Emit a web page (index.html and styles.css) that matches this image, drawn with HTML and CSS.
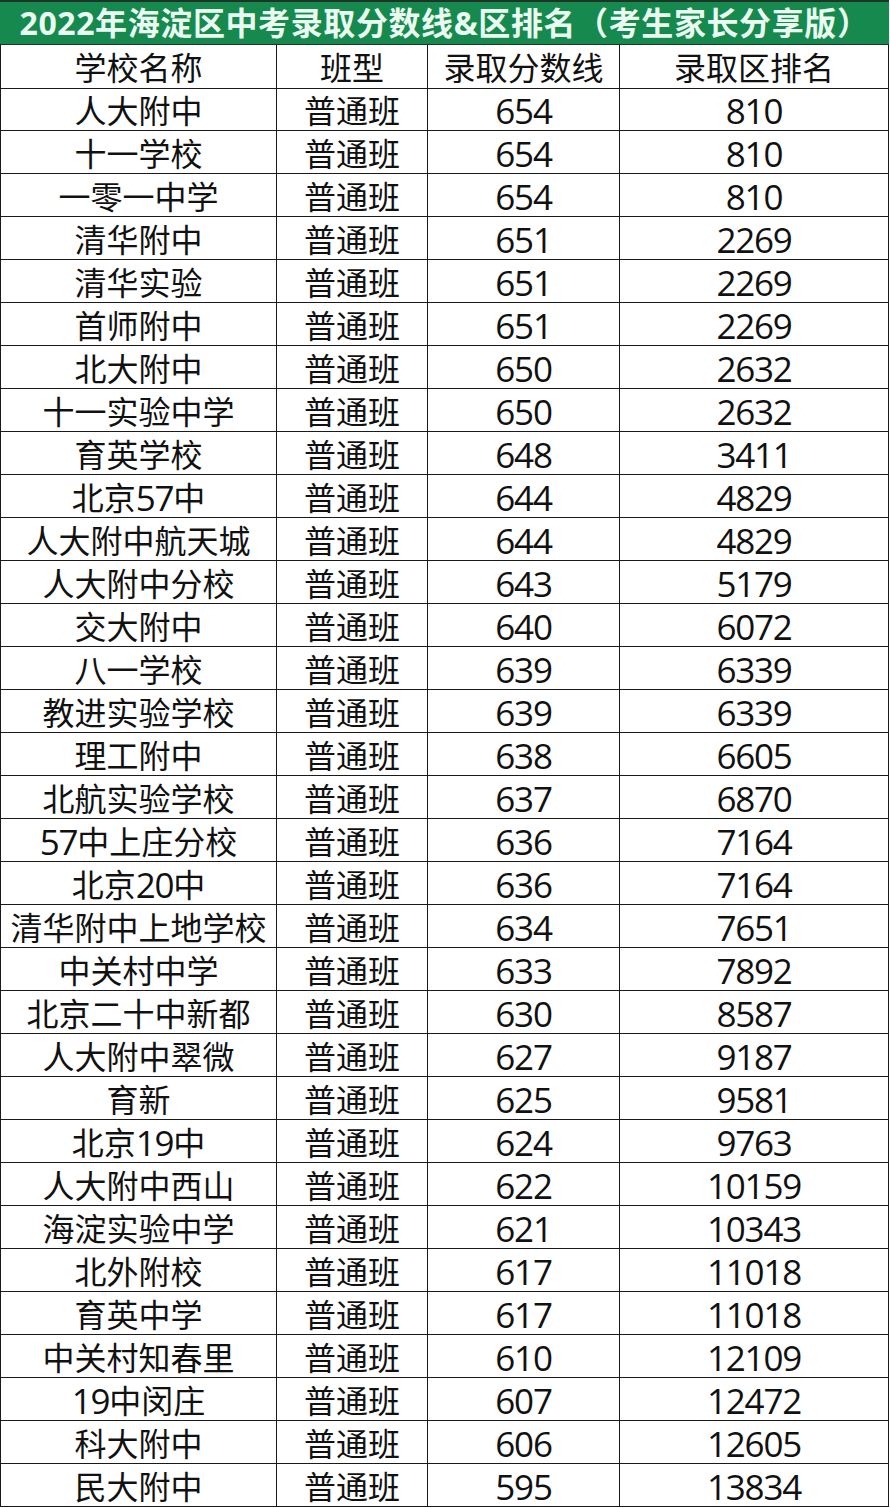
FILE: index.html
```html
<!DOCTYPE html>
<html lang="zh-CN">
<head>
<meta charset="utf-8">
<title>2022年海淀区中考录取分数线&amp;区排名</title>
<link rel="stylesheet" href="styles.css">
</head>
<body>
<div class="sheet">
  <div class="title">2022年海淀区中考录取分数线&amp;区排名（考生家长分享版）</div>
  <div class="grid">
    <div class="cell head">学校名称</div><div class="cell head">班型</div><div class="cell head">录取分数线</div><div class="cell head">录取区排名</div>
    <div class="cell">人大附中</div><div class="cell">普通班</div><div class="cell num">654</div><div class="cell num">810</div>
    <div class="cell">十一学校</div><div class="cell">普通班</div><div class="cell num">654</div><div class="cell num">810</div>
    <div class="cell">一零一中学</div><div class="cell">普通班</div><div class="cell num">654</div><div class="cell num">810</div>
    <div class="cell">清华附中</div><div class="cell">普通班</div><div class="cell num">651</div><div class="cell num">2269</div>
    <div class="cell">清华实验</div><div class="cell">普通班</div><div class="cell num">651</div><div class="cell num">2269</div>
    <div class="cell">首师附中</div><div class="cell">普通班</div><div class="cell num">651</div><div class="cell num">2269</div>
    <div class="cell">北大附中</div><div class="cell">普通班</div><div class="cell num">650</div><div class="cell num">2632</div>
    <div class="cell">十一实验中学</div><div class="cell">普通班</div><div class="cell num">650</div><div class="cell num">2632</div>
    <div class="cell">育英学校</div><div class="cell">普通班</div><div class="cell num">648</div><div class="cell num">3411</div>
    <div class="cell">北京<span class="d">57</span>中</div><div class="cell">普通班</div><div class="cell num">644</div><div class="cell num">4829</div>
    <div class="cell">人大附中航天城</div><div class="cell">普通班</div><div class="cell num">644</div><div class="cell num">4829</div>
    <div class="cell">人大附中分校</div><div class="cell">普通班</div><div class="cell num">643</div><div class="cell num">5179</div>
    <div class="cell">交大附中</div><div class="cell">普通班</div><div class="cell num">640</div><div class="cell num">6072</div>
    <div class="cell">八一学校</div><div class="cell">普通班</div><div class="cell num">639</div><div class="cell num">6339</div>
    <div class="cell">教进实验学校</div><div class="cell">普通班</div><div class="cell num">639</div><div class="cell num">6339</div>
    <div class="cell">理工附中</div><div class="cell">普通班</div><div class="cell num">638</div><div class="cell num">6605</div>
    <div class="cell">北航实验学校</div><div class="cell">普通班</div><div class="cell num">637</div><div class="cell num">6870</div>
    <div class="cell"><span class="d">57</span>中上庄分校</div><div class="cell">普通班</div><div class="cell num">636</div><div class="cell num">7164</div>
    <div class="cell">北京<span class="d">20</span>中</div><div class="cell">普通班</div><div class="cell num">636</div><div class="cell num">7164</div>
    <div class="cell">清华附中上地学校</div><div class="cell">普通班</div><div class="cell num">634</div><div class="cell num">7651</div>
    <div class="cell">中关村中学</div><div class="cell">普通班</div><div class="cell num">633</div><div class="cell num">7892</div>
    <div class="cell">北京二十中新都</div><div class="cell">普通班</div><div class="cell num">630</div><div class="cell num">8587</div>
    <div class="cell">人大附中翠微</div><div class="cell">普通班</div><div class="cell num">627</div><div class="cell num">9187</div>
    <div class="cell">育新</div><div class="cell">普通班</div><div class="cell num">625</div><div class="cell num">9581</div>
    <div class="cell">北京<span class="d">19</span>中</div><div class="cell">普通班</div><div class="cell num">624</div><div class="cell num">9763</div>
    <div class="cell">人大附中西山</div><div class="cell">普通班</div><div class="cell num">622</div><div class="cell num">10159</div>
    <div class="cell">海淀实验中学</div><div class="cell">普通班</div><div class="cell num">621</div><div class="cell num">10343</div>
    <div class="cell">北外附校</div><div class="cell">普通班</div><div class="cell num">617</div><div class="cell num">11018</div>
    <div class="cell">育英中学</div><div class="cell">普通班</div><div class="cell num">617</div><div class="cell num">11018</div>
    <div class="cell">中关村知春里</div><div class="cell">普通班</div><div class="cell num">610</div><div class="cell num">12109</div>
    <div class="cell"><span class="d">19</span>中闵庄</div><div class="cell">普通班</div><div class="cell num">607</div><div class="cell num">12472</div>
    <div class="cell">科大附中</div><div class="cell">普通班</div><div class="cell num">606</div><div class="cell num">12605</div>
    <div class="cell">民大附中</div><div class="cell">普通班</div><div class="cell num">595</div><div class="cell num">13834</div>
  </div>
</div>
</body>
</html>
```

FILE: styles.css
```css
html, body {
  margin: 0;
  padding: 0;
  background: #ffffff;
}

.sheet {
  width: 889px;
  font-family: "Open Sans", "Noto Sans CJK SC", sans-serif;
  color: #111111;
}

.title {
  box-sizing: border-box;
  height: 45px;
  border-top: 2px solid #1d3527;
  border-bottom: 1px solid #1d3527;
  background: #16894f;
  color: #eafaf0;
  font-weight: 700;
  font-size: 32px;
  line-height: 42px;
  text-align: center;
  white-space: nowrap;
  letter-spacing: 0.6px;
}

.grid {
  display: grid;
  grid-template-columns: 276px 151px 192px 269px;
  grid-auto-rows: 43px;
  border-left: 1px solid #1a1a1a;
}

.cell {
  box-sizing: border-box;
  border-right: 1px solid #1a1a1a;
  border-bottom: 1px solid #1a1a1a;
  display: flex;
  align-items: center;
  justify-content: center;
  padding-top: 3px;
  font-size: 32px;
  line-height: 1;
  white-space: nowrap;
}

.head {
  height: 44px;
}

.num,
.d {
  font-size: 35px;
  letter-spacing: -1.2px;
}
```
